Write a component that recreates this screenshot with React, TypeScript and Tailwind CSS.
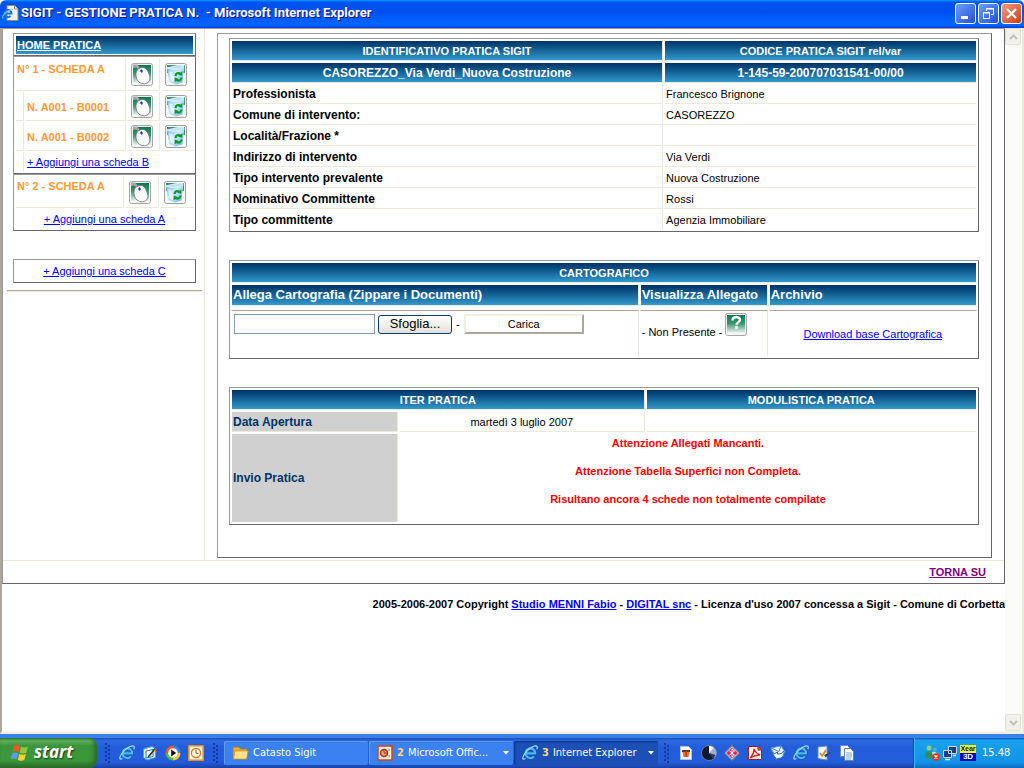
import type { ReactNode } from "react";
import { clsx } from "clsx";

const frame = "border border-t-[#999] border-l-[#999] border-r-[#666] border-b-[#666]";
const grid = clsx("w-full table-fixed border-separate border-spacing-px", frame);
const baseCell =
  "border border-l-white border-r-[#ece9d8] border-b-[#ece9d8] bg-clip-padding px-px last:border-r-white [tbody>tr:last-child>&]:border-b-white";
const cell = clsx(baseCell, "border-t-white");
const ruledCell = clsx(baseCell, "border-t-[#aca899]");
const blue = "bg-linear-to-b from-[#003366] to-[#3399cc] font-bold text-white whitespace-nowrap";
const link = "text-[#0000ff] underline";

function IeIcon() {
  return (
    <svg width="16" height="16" viewBox="0 0 16 16" fill="none">
      <path d="M3.500 8.500h9.800a4.900 4.900 0 1 0-1.300 3" stroke="#0d4fae" strokeWidth="3.200" />
      <path d="M3.500 8.400h9.600a4.800 4.800 0 1 0-1.200 3" stroke="#4fb6f7" strokeWidth="2.200" />
      <path d="M3.500 13.500C.5 15.500-.2 13 2.500 9 5.500 4.500 12.500-.5 14.800 1.300c.8.700.5 1.800 0 2.900" stroke="#9be0ff" strokeWidth="1.200" />
    </svg>
  );
}

function PageIcon() {
  return (
    <svg width="17" height="17" viewBox="0 0 17 17">
      <path d="M5 .5h7.500L16 4v11.500H5Z" fill="#f5f3e6" stroke="#8b8b7a" />
      <path d="M12.500.500V4H16" fill="#fff" stroke="#8b8b7a" />
      <path d="M2.500 8.500h7a3.500 3.500 0 1 0-1 2.500" fill="none" stroke="#1d75d8" strokeWidth="2" />
      <path d="M1 13.500C-.5 11.500 4 5 11 4.500" fill="none" stroke="#74c8ff" strokeWidth="1.200" />
    </svg>
  );
}

function MouseIcon() {
  return (
    <svg width="22" height="23" viewBox="0 0 22 23">
      <defs>
        <linearGradient id="green" x2="0" y2="1">
          <stop stopColor="#087a4c" />
          <stop offset=".45" stopColor="#3a9672" />
          <stop offset="1" stopColor="#fff" />
        </linearGradient>
      </defs>
      <rect x=".5" y=".5" width="21" height="22" rx="2" fill="#f4f4f4" stroke="#a5a5a5" />
      <rect x="2" y="2" width="18" height="19" fill="url(#green)" />
      <path d="M2 4.500c2-1.500 4-1.500 6 1M2 2.500h4l2 3" fill="none" stroke="#a3aaa6" strokeWidth="1.800" />
      <path d="M8 5.500C5.500 6.500 4.500 10 5.200 14c.9 4.200 4 7 8.300 6.700 3.700-.2 5.700-3 5.300-6.200-.5-4-2.800-9.700-6.800-10-1.400-.1-3 .5-4 1Z" fill="#fff" stroke="#676b72" strokeWidth=".8" />
      <path d="M6 12c3 .5 7-1.700 9-5" fill="none" stroke="#dfe1e8" strokeWidth=".8" />
      <ellipse cx="10.500" cy="8" rx="1.200" ry="1.700" fill="#3037a8" transform="rotate(-20 10.500 8)" />
    </svg>
  );
}

function BinIcon() {
  return (
    <svg width="22" height="23" viewBox="0 0 22 23">
      <defs>
        <linearGradient id="glass" x2="1" y2="1">
          <stop stopColor="#58b0ea" />
          <stop offset=".45" stopColor="#cdeafb" />
          <stop offset="1" stopColor="#68b2e2" />
        </linearGradient>
      </defs>
      <rect x=".5" y=".5" width="21" height="22" rx="2" fill="#f8f8f8" stroke="#a0a0a0" />
      <path d="M2 2h18v8H2Z" fill="#3c9070" />
      <path d="M2 5 8 6.500 15 5.500 19.500 2l-2 17.500L11 21.500 4 19Z" fill="url(#glass)" />
      <path d="m2 5 8-2 9.500-1.500L15 5.500 8 6.500Z" fill="#b9e0f8" stroke="#f2fbff" strokeWidth=".8" />
      <path d="m4 8 2 9.500 4 2.500L7.500 9Z" fill="#fff" opacity=".6" />
      <path d="M10.500 13c.3-2.700 2.500-3.700 5-2.300M16.500 14.500c-.3 2.700-2.500 4-5 2.500" fill="none" stroke="#0c9a26" strokeWidth="2.200" />
      <path d="m17.500 8-.3 5-4-1.500ZM9.500 19.500l.3-5 4 1.500Z" fill="#0c9a26" />
    </svg>
  );
}

function HelpIcon() {
  return (
    <svg width="22" height="23" viewBox="0 0 22 23">
      <rect x=".5" y=".5" width="21" height="22" rx="2" fill="#f4f4f4" stroke="#a5a5a5" />
      <rect x="2" y="2" width="18" height="19" fill="url(#green)" />
      <path d="M7.500 7.500c0-4.500 7.500-4.500 7.500-.7 0 2.500-3.500 2.500-3.500 5" fill="none" stroke="#fff" strokeWidth="2.400" />
      <rect x="10.200" y="13.200" width="2.600" height="2.600" fill="#fff" />
    </svg>
  );
}

function Svg({ children }: { children: ReactNode }) {
  return <svg width="16" height="16" viewBox="0 0 16 16">{children}</svg>;
}

function WindowsLogo() {
  return (
    <svg width="20" height="18" viewBox="0 0 20 18">
      <path d="M4 1.800C6 .6 8 .8 9.800 2L8.300 8C6.500 6.900 4.500 6.800 2.500 7.900Z" fill="#f0582a" />
      <path d="M11 2.500c2 1.200 4.200 1.300 6.800.2L16.200 8.800c-2.400 1-4.600.9-6.600-.3Z" fill="#8ccc3c" />
      <path d="M2.200 9.200c2-1.100 4-1 5.800.1L6.500 15.300c-1.800-1-3.800-1.100-5.800 0Z" fill="#5b9bf8" />
      <path d="M9.300 9.800c2 1.200 4.200 1.300 6.600.3l-1.600 6c-2.400 1-4.600.9-6.500-.3Z" fill="#fbd02e" />
    </svg>
  );
}

const quickLaunch = [
  { name: "Internet Explorer", icon: <IeIcon /> },
  {
    name: "Desktop",
    icon: (
      <Svg>
        <path d="M1.500 4 10 1.500l3.500 2v9L5 15l-3.500-2.500Z" fill="#e8f4ff" stroke="#3fa2e8" />
        <path d="m4 6 7-1.500v7L4 13Z" fill="#fff" stroke="#2877c4" />
        <path d="m6 11 6.500-8 1.300 1-6 7.500-2.300.8Z" fill="#333" />
        <path d="m12 4 3.500 3-2.500 1Z" fill="#e56b1f" />
      </Svg>
    ),
  },
  {
    name: "Media Player",
    icon: (
      <Svg>
        <path d="M8 .5A7.500 7.500 0 0 0 .5 8H8Z" fill="#e85a24" />
        <path d="M8 .5A7.500 7.500 0 0 1 15.500 8H8Z" fill="#3c81e0" />
        <path d="M.5 8A7.500 7.500 0 0 0 8 15.500V8Z" fill="#59b737" />
        <path d="M8 15.500A7.500 7.500 0 0 0 15.500 8H8Z" fill="#f5c526" />
        <circle cx="8" cy="8" r="4.800" fill="#f6f6fa" />
        <path d="m6.200 4.500 5 3.500-5 3.500Z" fill="#111" />
      </Svg>
    ),
  },
  {
    name: "Outlook",
    icon: (
      <Svg>
        <rect x=".8" y=".8" width="14.400" height="14.400" fill="#fff6da" stroke="#e88c22" strokeWidth="1.500" />
        <circle cx="8" cy="8" r="4.500" fill="#fffdf4" stroke="#d77a1d" strokeWidth="1.300" />
        <path d="M8 5v3.300h2.500" fill="none" stroke="#8b5215" />
      </Svg>
    ),
  },
];

const shortcuts = [
  {
    name: "Immagini",
    icon: (
      <Svg>
        <path d="M2.500 1.500h8l3 3v10h-11Z" fill="#fff" stroke="#a9c6ee" />
        <path d="M4 5h8v2H4Z" fill="#5a3a2a" />
        <path d="M4.500 7h7l-1 5h-5Z" fill="#e87522" />
        <path d="M7.500 6h1.500v6H7.500Z" fill="#c33d18" />
      </Svg>
    ),
  },
  {
    name: "Disco",
    icon: (
      <Svg>
        <circle cx="8" cy="8" r="7.500" fill="#10182e" stroke="#7986a6" strokeWidth=".8" />
        <path d="M8 .8a7 7 0 0 1 5 12.200L8 8Z" fill="#9fb0d0" />
        <path d="M8 8V.8a7 7 0 0 1 4.500 2.200Z" fill="#f5f7fb" />
        <path d="m8 8 6.500 2-2.500 4Z" fill="#22386a" />
      </Svg>
    ),
  },
  {
    name: "Bluetooth",
    icon: (
      <Svg>
        <path d="m8 .5 7.500 7.500L8 15.500.5 8Z" fill="#b8b8b8" stroke="#777" />
        <path d="m8 3 5.500 5L8 13 2.500 8Z" fill="#e01e70" />
        <path d="m5.500 6 5 4L8 12V4l2.500 2-5 4" fill="none" stroke="#fff" />
      </Svg>
    ),
  },
  {
    name: "Acrobat",
    icon: (
      <Svg>
        <path d="M1.500 1.500h10l3 3v10h-13Z" fill="#f6f0ef" stroke="#a51d14" />
        <path d="M11 1.500V5h3.500" fill="#d8554a" stroke="#a51d14" />
        <path d="M3 13c2-2 4-6 4-9 2 4 3 5 6 6-4 0-7 1-10 3Z" fill="none" stroke="#d4261c" strokeWidth="1.400" />
      </Svg>
    ),
  },
  {
    name: "Outlook Express",
    icon: (
      <Svg>
        <path d="m1 3 10-2 4 6-10 4Z" fill="#e8f6ff" stroke="#5ba6df" />
        <path d="m1.500 3 7.500 3.500L11 1" fill="none" stroke="#4b91c8" />
        <path d="M3 9.500 7.500 7v2c3 .5 5-1 6-3 1.500 4-1 7.500-6 7.500v2Z" fill="#f4faff" stroke="#2f72b8" />
      </Svg>
    ),
  },
  { name: "Esplora Web", icon: <IeIcon /> },
  {
    name: "Blocco note",
    icon: (
      <Svg>
        <path d="m2 2 9-1v14l-9-1.500Z" fill="#eef6ff" stroke="#6c91b8" />
        <path d="m4 8 2 3 4-6" fill="none" stroke="#d98d20" strokeWidth="1.600" />
        <path d="m8 10 7.500-3-6 5.500Z" fill="#303f58" />
      </Svg>
    ),
  },
  {
    name: "Documenti",
    icon: (
      <Svg>
        <path d="M1.500.500h7l2 2v9h-9Z" fill="#fff" stroke="#6f8db4" />
        <path d="M5.500 3.500h6l3 3v9h-9Z" fill="#fff" stroke="#5f7ea8" />
        <path d="M7 8h6M7 10h6M7 12h6M7 14h5" stroke="#78a0cf" />
      </Svg>
    ),
  },
];

const dati = [
  ["Professionista", "Francesco Brignone"],
  ["Comune di intervento:", "CASOREZZO"],
  ["Località/Frazione *", ""],
  ["Indirizzo di intervento", "Via Verdi"],
  ["Tipo intervento prevalente", "Nuova Costruzione"],
  ["Nominativo Committente", "Rossi"],
  ["Tipo committente", "Agenzia Immobiliare"],
];

function TitleBar() {
  const button = "flex size-[21px] items-center justify-center rounded-[3px] border border-white";
  return (
    <header className="flex h-7 shrink-0 items-center gap-0.5 rounded-t-md bg-[linear-gradient(180deg,#0997ff,#0053ee_8%,#0050ee_40%,#0066ff_88%,#0066ff_93%,#003dd7_96%,#003dd7)] pr-0.5 pb-0.5 pl-0.5">
      <PageIcon />
      <h1 className="flex-1 font-[Roboto,'Open_Sans',sans-serif] text-[13px] font-bold whitespace-pre text-white [text-shadow:1px_1px_#0f1089]">
        {"SIGIT - GESTIONE PRATICA N.  - Microsoft Internet Explorer"}
      </h1>
      <button aria-label="Riduci a icona" className={clsx(button, "bg-linear-to-br from-[#6d9df8] to-[#1f4fd8]")}>
        <svg width="15" height="15"><rect x="3" y="10" width="7" height="3" fill="#fff" /></svg>
      </button>
      <button aria-label="Ripristina" className={clsx(button, "bg-linear-to-br from-[#6d9df8] to-[#1f4fd8]")}>
        <svg width="15" height="15" fill="none" stroke="#fff">
          <path d="M5.500 5V2.500h7v6H10M5 3h8" />
          <path d="M2.500 6.500h6v6h-6ZM2 7h7" />
        </svg>
      </button>
      <button aria-label="Chiudi" className={clsx(button, "bg-linear-to-br from-[#f09a7c] to-[#cc3a12]")}>
        <svg width="15" height="15"><path d="m3 3 9 9m0-9-9 9" stroke="#fff" strokeWidth="2.200" /></svg>
      </button>
    </header>
  );
}

function Actions() {
  return (
    <>
      <td className={cell}>
        <button aria-label="Modifica" className="ml-0.5 block"><MouseIcon /></button>
      </td>
      <td className={cell}>
        <button aria-label="Elimina" className="ml-0.5 block"><BinIcon /></button>
      </td>
    </>
  );
}

function Sidebar() {
  const scheda = clsx(cell, "text-left font-bold text-[#ff9933]");
  return (
    <nav className="w-[202px] shrink-0 border-r border-[#ece9d8] pt-1 text-[11px]">
      <div className="pr-2 pl-2.5">
        <div className={clsx("h-[23px] p-0.5", frame)}>
          <a href="#home" className={clsx("block h-[18px] pl-px leading-[18px] underline", blue)}>HOME PRATICA</a>
        </div>
        <table className={grid}>
          <colgroup>
            <col className="w-[9px]" />
            <col />
            <col className="w-[33px]" />
            <col className="w-[33px]" />
          </colgroup>
          <tbody>
            <tr className="h-[33px]">
              <th scope="row" colSpan={2} className={clsx(scheda, "pt-0.5 align-top")}>N° 1 - SCHEDA A</th>
              <Actions />
            </tr>
            {["N. A001 - B0001", "N. A001 - B0002"].map((name) => (
              <tr key={name} className="h-[29px]">
                <td className={cell} />
                <th scope="row" className={scheda}>{name}</th>
                <Actions />
              </tr>
            ))}
            <tr className="h-5">
              <td className={cell} />
              <td colSpan={3} className="px-0.5 leading-4"><a href="#b" className={link}>+ Aggiungi una scheda B</a></td>
            </tr>
          </tbody>
        </table>
        <table className={grid}>
          <colgroup>
            <col />
            <col className="w-[34px]" />
            <col className="w-[34px]" />
          </colgroup>
          <tbody>
            <tr className="h-8">
              <th scope="row" className={clsx(scheda, "pt-px align-top")}>N° 2 - SCHEDA A</th>
              <Actions />
            </tr>
            <tr className="h-5">
              <td colSpan={3} className="text-center leading-4"><a href="#a" className={link}>+ Aggiungi una scheda A</a></td>
            </tr>
          </tbody>
        </table>
        <div className={clsx("mt-7 py-0.5 text-center leading-[18px]", frame)}>
          <a href="#c" className={link}>+ Aggiungi una scheda C</a>
        </div>
      </div>
      <hr className="mr-0.5 ml-1 mt-[7px] border-t border-b border-t-[#aca899] border-b-[#ece9d8]" />
    </nav>
  );
}

function Identificativo() {
  return (
    <table className={grid}>
      <colgroup>
        <col className="w-[58%]" />
        <col />
      </colgroup>
      <thead>
        <tr className="h-[21px]">
          <th className={clsx(cell, blue)}>IDENTIFICATIVO PRATICA SIGIT</th>
          <th className={clsx(cell, blue)}>CODICE PRATICA SIGIT rel/var</th>
        </tr>
        <tr className="h-[21px] text-xs">
          <th className={clsx(cell, blue)}>CASOREZZO_Via Verdi_Nuova Costruzione</th>
          <th className={clsx(cell, blue)}>1-145-59-200707031541-00/00</th>
        </tr>
      </thead>
      <tbody>
        {dati.map(([label, value]) => (
          <tr key={label} className="h-5">
            <th scope="row" className={clsx(cell, "text-left text-xs")}>{label}</th>
            <td className={cell}>{value}</td>
          </tr>
        ))}
      </tbody>
    </table>
  );
}

function Cartografico() {
  return (
    <table className={grid}>
      <colgroup>
        <col />
        <col className="w-[128px]" />
        <col className="w-[28%]" />
      </colgroup>
      <thead>
        <tr className="h-[21px]">
          <th colSpan={3} className={clsx(cell, blue)}>CARTOGRAFICO</th>
        </tr>
        <tr className="h-[22px] text-left text-[13px]">
          <th className={clsx(cell, blue)}>Allega Cartografia (Zippare i Documenti)</th>
          <th className={clsx(cell, blue)}>Visualizza Allegato</th>
          <th className={clsx(cell, blue)}>Archivio</th>
        </tr>
      </thead>
      <tbody>
        <tr className="h-0.5"><td colSpan={3} /></tr>
        <tr className="h-[47px]">
          <td className={clsx(ruledCell, "pt-[3px] align-top")}>
            <form className="flex items-center gap-[3px] pl-px">
              <input type="text" aria-label="Allega Cartografia" className="h-5 w-[141px] border border-[#7f9db9] bg-white" />
              <button type="button" className="h-[19px] w-[74px] rounded-[3px] border border-[#003c74] bg-linear-to-b from-white to-[#e3e1d8] text-[13px] leading-4">Sfoglia...</button>
              <span className="px-px">-</span>
              <button type="button" className="h-5 w-[120px] border-2 border-t-[#f1efe2] border-l-[#f1efe2] border-r-[#aca899] border-b-[#aca899] bg-white leading-4">Carica</button>
            </form>
          </td>
          <td className={clsx(ruledCell, "pt-0.5 align-top whitespace-nowrap")}>
            <div className="flex items-end gap-[3px]">
              <span>- Non Presente -</span>
              <button aria-label="Aiuto" className="mb-1"><HelpIcon /></button>
            </div>
          </td>
          <td className={clsx(ruledCell, "text-center")}><a href="#download" className={link}>Download base Cartografica</a></td>
        </tr>
      </tbody>
    </table>
  );
}

function Iter() {
  const label = clsx(cell, "bg-[#d0d0d0] text-left text-xs text-[#003366]");
  return (
    <table className={grid}>
      <colgroup>
        <col className="w-[167px]" />
        <col className="w-[33%]" />
        <col />
      </colgroup>
      <thead>
        <tr className="h-[21px]">
          <th colSpan={2} className={clsx(cell, blue)}>ITER PRATICA</th>
          <th className={clsx(cell, blue)}>MODULISTICA PRATICA</th>
        </tr>
      </thead>
      <tbody>
        <tr className="h-[21px]">
          <th scope="row" className={label}>Data Apertura</th>
          <td className={clsx(cell, "text-center")}>martedì 3 luglio 2007</td>
          <td className={cell} />
        </tr>
        <tr className="h-[90px]">
          <th scope="row" className={label}>Invio Pratica</th>
          <td colSpan={2} className="px-px pt-[3px] align-top text-center font-bold text-[#ff0000]">
            <p className="mb-3.5 leading-[14px]">Attenzione Allegati Mancanti.</p>
            <p className="mb-3.5 leading-[14px]">Attenzione Tabella Superfici non Completa.</p>
            <p className="leading-[14px]">Risultano ancora 4 schede non totalmente compilate</p>
          </td>
        </tr>
      </tbody>
    </table>
  );
}

function Scrollbar() {
  const arrow = "flex h-[17px] w-4 items-center justify-center rounded-[2px] border border-[#e3e1d8] bg-[#f1f0ea]";
  return (
    <div className="flex w-[19px] shrink-0 flex-col justify-between border-r-2 border-[#ece9d8] bg-[#fafaf7]">
      <button aria-label="Su" className={arrow}>
        <svg width="9" height="6" fill="none" stroke="#c4c2b8" strokeWidth="2"><path d="m1 5 3.500-3.500L8 5" /></svg>
      </button>
      <button aria-label="Giù" className={arrow}>
        <svg width="9" height="6" fill="none" stroke="#c4c2b8" strokeWidth="2"><path d="m1 1 3.500 3.500L8 1" /></svg>
      </button>
    </div>
  );
}

function Grip() {
  return (
    <svg width="5" height="22" className="shrink-0">
      {[1, 5, 9, 13, 17].map((y) => (
        <g key={y} fill="#12399c">
          <rect x="0" y={y} width="2" height="2" />
          <rect x="3" y={y + 2} width="2" height="2" />
        </g>
      ))}
    </svg>
  );
}

function Caret() {
  return <svg width="6" height="4" className="shrink-0"><path d="M0 0h6L3 3.500Z" fill="#fff" /></svg>;
}

function Taskbar() {
  const task = "flex h-6 w-36 items-center gap-1 rounded-[2px] pr-1 pl-2 text-left";
  return (
    <footer className="shrink-0 border-t-4 border-[#3a80e6] font-['DejaVu_Sans_Condensed','Noto_Sans',sans-serif] text-[11px] text-white">
      <div className="flex h-[30px] items-center bg-[linear-gradient(180deg,#1e4fb8,#2a6ae2_10%,#245dda_30%,#245ddb_80%,#1941a5)]">
        <button className="flex h-full w-[97px] items-center gap-1 rounded-r-lg bg-[linear-gradient(180deg,#2f7d2f,#5fae5f_10%,#3c963c_25%,#3a983a_75%,#2a712a)] pl-2.5 shadow-[inset_-3px_-2px_4px_#2a692a]">
          <WindowsLogo />
          <span className="pb-0.5 font-['Open_Sans','Noto_Sans',sans-serif] text-[17px] leading-6 font-bold italic [text-shadow:1px_1px_2px_#1c3f1c]">start</span>
        </button>
        <div className="ml-2 flex items-center gap-[7px]">
          <Grip />
          <div className="flex gap-[7px] px-0.5">
            {quickLaunch.map(({ name, icon }) => <button key={name} aria-label={name}>{icon}</button>)}
          </div>
          <Grip />
        </div>
        <div className="ml-1.5 flex gap-px">
          <button className={clsx(task, "bg-[#3c81f0] shadow-[inset_1px_1px_#5f9bf8]")}>
            <svg width="17" height="16" viewBox="0 0 17 16">
              <path d="M1 2h6l1.500 2H15v10H1Z" fill="#e4ad3c" stroke="#a87416" strokeWidth=".7" />
              <path d="M3 6h13l-1.500 8H1.500Z" fill="#fde28b" stroke="#c79628" strokeWidth=".7" />
            </svg>
            Catasto Sigit
          </button>
          <button className={clsx(task, "bg-[#3c81f0] shadow-[inset_1px_1px_#5f9bf8]")}>
            <svg width="16" height="16" viewBox="0 0 16 16">
              <rect x="1" y="1" width="14" height="14" fill="#fbe9dc" stroke="#c64a1c" strokeWidth="1.500" />
              <circle cx="7" cy="8" r="3.500" fill="#e9a37e" stroke="#a83810" strokeWidth="1.500" />
              <path d="M7 8V4.500M7 8h3M11.500 5H13M11.500 11H13" stroke="#a83810" />
            </svg>
            <b className="text-[#ffd67a]">2</b>
            <span className="flex-1 whitespace-nowrap">Microsoft Offic...</span>
            <Caret />
          </button>
          <button className={clsx(task, "bg-[#1d50b6] shadow-[inset_1px_1px_2px_#0c3180]")}>
            <IeIcon />
            <b className="text-[#ffd67a]">3</b>
            <span className="flex-1 whitespace-nowrap">Internet Explorer</span>
            <Caret />
          </button>
        </div>
        <div className="ml-1.5 flex items-center gap-[7px]">
          <Grip />
          <div className="flex gap-[7px] pl-0.5">
            {shortcuts.map(({ name, icon }) => <button key={name} aria-label={name}>{icon}</button>)}
          </div>
        </div>
        <div className="ml-auto flex h-full w-[111px] items-center gap-0.5 border-l border-[#0d4aa8] bg-[linear-gradient(180deg,#0c59b9,#1aa1f0_8%,#139ee9_30%,#1293e8_80%,#0b6ec0)] pl-2.5 shadow-[inset_1px_0_#35bdf8]">
          <Svg>
            <circle cx="5" cy="3" r="2.500" fill="#8ed36b" />
            <circle cx="11" cy="4.500" r="2" fill="#5aa9e0" />
            <path d="M1 12c0-8 7-8 9 0l-5 2Z" fill="#2f8f54" />
            <path d="M8 7c4-1 6 1 6 5H9Z" fill="#b8ddf5" />
            <circle cx="12" cy="12" r="3.800" fill="#e13420" />
            <path d="m10.500 10.500 3 3m0-3-3 3" stroke="#fff" strokeWidth="1.300" />
          </Svg>
          <Svg>
            <path d="M6.500 1.500h8v7h-8ZM1.500 5.500h8v7h-8Z" fill="#1d3e8c" stroke="#c9d3e2" />
            <path d="M3 14.500h5M11 10.500h3" stroke="#dae2ee" strokeWidth="1.500" />
          </Svg>
          <div className="flex w-4 flex-col items-center font-['Liberation_Sans',sans-serif] text-[8px] leading-2 font-bold">
            <span className="w-full bg-[#ffff00] text-center text-[7px] text-[#0000c0]">Xear</span>
            <span className="w-full bg-[#0000c0] text-center">3D</span>
          </div>
          <time className="pl-1">15.48</time>
        </div>
      </div>
    </footer>
  );
}

export default function App() {
  return (
    <div className="flex h-screen flex-col overflow-hidden bg-white font-['Liberation_Sans',Arial,sans-serif] text-[11px] leading-4 text-black">
      <TitleBar />
      <div className="flex min-h-0 flex-1 border-b-[3px] border-l-2 border-b-[#f1efe2] border-l-[#aca899]">
        <main className="min-w-0 flex-1">
          <div className={frame}>
            <div className="flex border-b border-[#ece9d8]">
              <Sidebar />
              <div className="min-w-0 flex-1 pt-1 pr-3 pb-0.5 pl-3">
                <div className={clsx("flex flex-col gap-7 pt-1 pr-3 pb-8 pl-[11px]", frame)}>
                  <Identificativo />
                  <Cartografico />
                  <Iter />
                </div>
              </div>
            </div>
            <div className="h-[22px] pr-[18px] text-right leading-[22px] font-bold">
              <a href="#top" className="text-[#800080] underline">TORNA SU</a>
            </div>
          </div>
          <p className="mt-3 text-right font-bold">
            2005-2006-2007 Copyright <a href="#menni" className={link}>Studio MENNI Fabio</a> - <a href="#digital" className={link}>DIGITAL snc</a> - Licenza d'uso 2007 concessa a Sigit - Comune di Corbetta
          </p>
        </main>
        <Scrollbar />
      </div>
      <Taskbar />
    </div>
  );
}
